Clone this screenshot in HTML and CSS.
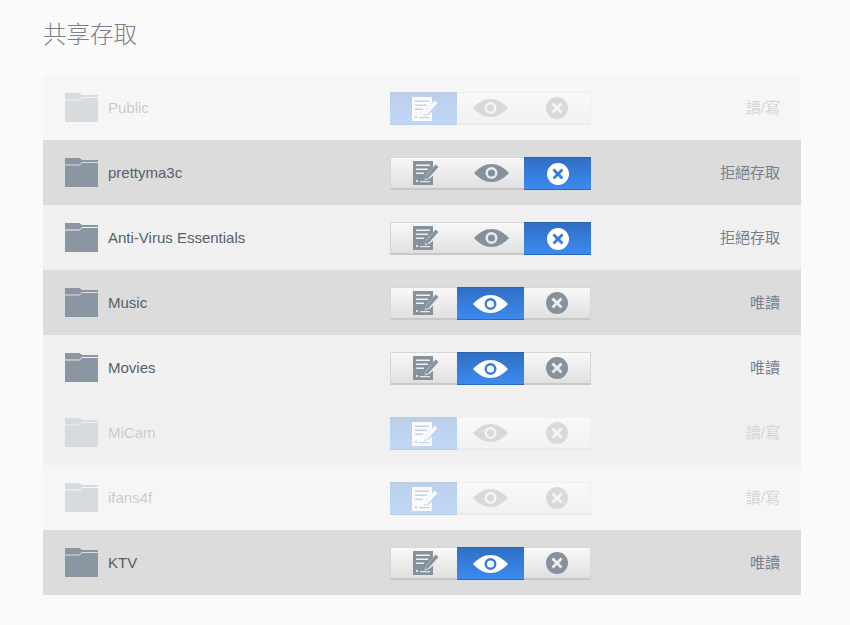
FILE: index.html
```html
<!DOCTYPE html>
<html lang="zh-Hant">
<head>
<meta charset="utf-8">
<title>共享存取</title>
<link rel="stylesheet" href="styles.css">
</head>
<body>
<svg class="defs" width="0" height="0" aria-hidden="true">
  <symbol id="i-folder" viewBox="0 0 33 29">
    <path fill="currentColor" d="M0 0H14.500L17 2H33V4H17L14.500 6.500H0Z"/>
    <path fill="currentColor" d="M0 7.500H14.500L17 5H33V29H0Z"/>
  </symbol>
  <symbol id="i-edit" viewBox="0 0 26 24">
    <path fill="currentColor" fill-rule="evenodd" d="M0 0H20V6.500L13.500 14 11.500 19.500 17 17.500 20 14.500V24H0ZM3 3.500V5H17V3.500ZM3 7.500V9H15V7.500ZM3 11.500V13H11V11.500ZM3 19V21H5V19ZM7 20V21.200H17V20Z"/>
    <path fill="currentColor" d="M22.500 3.500L25.500 6 15.500 17 12.500 18.500 13.200 15Z"/>
  </symbol>
  <symbol id="i-eye" viewBox="0 0 35 18">
    <path fill="currentColor" fill-rule="evenodd" d="M0 9C6 2.800 11 0 17.500 0S29 2.800 35 9C29 15.200 24 18 17.500 18S6 15.200 0 9ZM17.500 3A6 6 0 1 0 17.500 15 6 6 0 1 0 17.500 3ZM17.500 5.400A3.600 3.600 0 1 1 17.500 12.600 3.600 3.600 0 1 1 17.500 5.400Z"/>
  </symbol>
  <symbol id="i-deny" viewBox="0 0 22 22">
    <path fill="currentColor" fill-rule="evenodd" d="M11 0A11 11 0 1 1 11 22 11 11 0 1 1 11 0ZM7.500 5.500L5.500 7.500 9 11 5.500 14.500 7.500 16.500 11 13 14.500 16.500 16.500 14.500 13 11 16.500 7.500 14.500 5.500 11 9Z"/>
  </symbol>
</svg>
<main class="page">
  <h1 class="title">共享存取</h1>
  <ul class="list">
    <li class="row row-odd row-off">
      <div class="name"><svg class="folder"><use href="#i-folder"/></svg><span>Public</span></div>
      <div class="switch">
        <div class="seg seg-on"><svg class="ic-edit"><use href="#i-edit"/></svg></div>
        <div class="seg"><svg class="ic-eye"><use href="#i-eye"/></svg></div>
        <div class="seg"><svg class="ic-deny"><use href="#i-deny"/></svg></div>
      </div>
      <div class="state">讀/寫</div>
    </li>
    <li class="row row-even">
      <div class="name"><svg class="folder"><use href="#i-folder"/></svg><span>prettyma3c</span></div>
      <div class="switch">
        <div class="seg"><svg class="ic-edit"><use href="#i-edit"/></svg></div>
        <div class="seg"><svg class="ic-eye"><use href="#i-eye"/></svg></div>
        <div class="seg seg-on"><svg class="ic-deny"><use href="#i-deny"/></svg></div>
      </div>
      <div class="state">拒絕存取</div>
    </li>
    <li class="row row-odd">
      <div class="name"><svg class="folder"><use href="#i-folder"/></svg><span>Anti-Virus Essentials</span></div>
      <div class="switch">
        <div class="seg"><svg class="ic-edit"><use href="#i-edit"/></svg></div>
        <div class="seg"><svg class="ic-eye"><use href="#i-eye"/></svg></div>
        <div class="seg seg-on"><svg class="ic-deny"><use href="#i-deny"/></svg></div>
      </div>
      <div class="state">拒絕存取</div>
    </li>
    <li class="row row-even">
      <div class="name"><svg class="folder"><use href="#i-folder"/></svg><span>Music</span></div>
      <div class="switch">
        <div class="seg"><svg class="ic-edit"><use href="#i-edit"/></svg></div>
        <div class="seg seg-on"><svg class="ic-eye"><use href="#i-eye"/></svg></div>
        <div class="seg"><svg class="ic-deny"><use href="#i-deny"/></svg></div>
      </div>
      <div class="state">唯讀</div>
    </li>
    <li class="row row-odd">
      <div class="name"><svg class="folder"><use href="#i-folder"/></svg><span>Movies</span></div>
      <div class="switch">
        <div class="seg"><svg class="ic-edit"><use href="#i-edit"/></svg></div>
        <div class="seg seg-on"><svg class="ic-eye"><use href="#i-eye"/></svg></div>
        <div class="seg"><svg class="ic-deny"><use href="#i-deny"/></svg></div>
      </div>
      <div class="state">唯讀</div>
    </li>
    <li class="row row-even row-off">
      <div class="name"><svg class="folder"><use href="#i-folder"/></svg><span>MiCam</span></div>
      <div class="switch">
        <div class="seg seg-on"><svg class="ic-edit"><use href="#i-edit"/></svg></div>
        <div class="seg"><svg class="ic-eye"><use href="#i-eye"/></svg></div>
        <div class="seg"><svg class="ic-deny"><use href="#i-deny"/></svg></div>
      </div>
      <div class="state">讀/寫</div>
    </li>
    <li class="row row-odd row-off">
      <div class="name"><svg class="folder"><use href="#i-folder"/></svg><span>ifans4f</span></div>
      <div class="switch">
        <div class="seg seg-on"><svg class="ic-edit"><use href="#i-edit"/></svg></div>
        <div class="seg"><svg class="ic-eye"><use href="#i-eye"/></svg></div>
        <div class="seg"><svg class="ic-deny"><use href="#i-deny"/></svg></div>
      </div>
      <div class="state">讀/寫</div>
    </li>
    <li class="row row-even">
      <div class="name"><svg class="folder"><use href="#i-folder"/></svg><span>KTV</span></div>
      <div class="switch">
        <div class="seg"><svg class="ic-edit"><use href="#i-edit"/></svg></div>
        <div class="seg seg-on"><svg class="ic-eye"><use href="#i-eye"/></svg></div>
        <div class="seg"><svg class="ic-deny"><use href="#i-deny"/></svg></div>
      </div>
      <div class="state">唯讀</div>
    </li>
  </ul>
</main>
</body>
</html>
```
FILE: styles.css
```css
* { box-sizing: border-box; }
html, body { margin: 0; padding: 0; }
body {
  width: 850px;
  height: 625px;
  overflow: hidden;
  background: #fafafa;
  font-family: "Liberation Sans", "Noto Sans CJK TC", sans-serif;
  color: #5f6a74;
}
.defs { display: block; width: 0; height: 0; }
.page { padding: 19px 49px 0 43px; }
.title {
  margin: 0 0 23px;
  height: 33px;
  font-size: 23.5px;
  line-height: 33px;
  font-weight: 300;
  color: #7b8086;
}
.list { list-style: none; margin: 0; padding: 0; }
.row {
  display: grid;
  grid-template-columns: 347px 201px 1fr;
  align-items: center;
  height: 65px;
}
.row-odd { background: #f0f0f0; }
.row-even { background: #dcdcdc; }
.row-off { opacity: 0.3; }
.name {
  display: flex;
  align-items: center;
  gap: 10px;
  padding-left: 22px;
  font-size: 15px;
  color: #55606a;
}
.folder { width: 33px; height: 29px; color: #8a96a1; flex: none; }
.switch {
  display: flex;
  height: 33px;
  width: 201px;
  margin-top: 2px;
  border: 1px solid #d6d6d6;
  border-bottom: 2px solid #c8c8c8;
  background: linear-gradient(#f8f8f8, #e0e0e0);
}
.seg {
  flex: 1 1 0;
  display: flex;
  align-items: center;
  justify-content: center;
  color: #85919c;
}
.seg-on {
  margin: -1px 0 -2px;
  background: linear-gradient(#2f6fc4, #3c8af0);
  border-top: 1px solid #2a63b0;
  border-bottom: 1px solid #2a67bb;
  color: #fff;
}
.seg:first-child.seg-on { margin-left: -1px; }
.seg:last-child.seg-on { margin-right: -1px; }
.ic-edit { width: 26px; height: 24px; margin-left: 4px; }
.ic-eye { width: 35px; height: 18px; margin-left: 1px; }
.ic-deny { width: 22px; height: 22px; margin-left: 1px; }
.state {
  padding-right: 21px;
  padding-bottom: 2px;
  text-align: right;
  font-size: 15px;
  color: #75808b;
}
```
